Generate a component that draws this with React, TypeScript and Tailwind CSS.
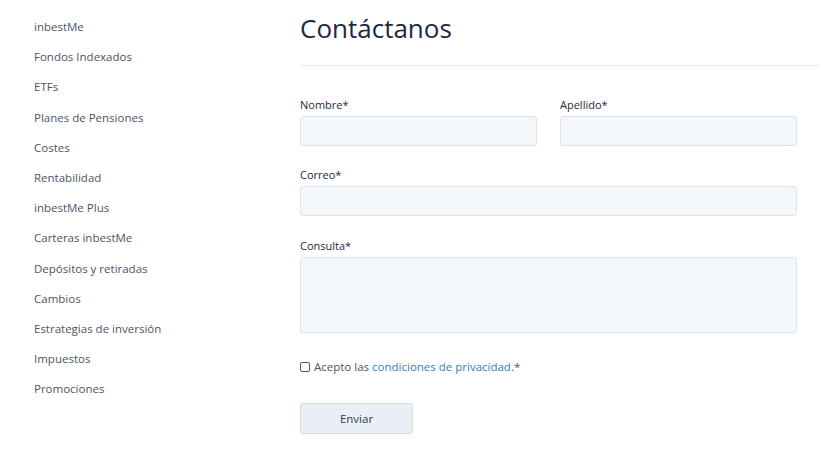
const links = [
  "inbestMe",
  "Fondos Indexados",
  "ETFs",
  "Planes de Pensiones",
  "Costes",
  "Rentabilidad",
  "inbestMe Plus",
  "Carteras inbestMe",
  "Depósitos y retiradas",
  "Cambios",
  "Estrategias de inversión",
  "Impuestos",
  "Promociones",
];

const inputCls =
  "block w-full rounded-[3px] border border-[#dde3ea] bg-[#f4f7fa] outline-none";

const App = () => {
  return (
    <div className="flex h-[460px] w-[840px] bg-white font-['Open_Sans',sans-serif] text-[#1b2a41]">
      {/* Sidebar */}
      <aside className="w-[300px] shrink-0 pl-[34px] pt-[17px]">
        <ul className="flex flex-col">
          {links.map((l) => (
            <li key={l} className="h-[30.2px] text-[11.5px] leading-[20px] text-[#4b5565]">
              {l}
            </li>
          ))}
        </ul>
      </aside>

      {/* Main */}
      <main className="w-[520px]">
        <h1 className="pt-[12px] text-[26px] leading-[32px] font-normal text-[#1b2a41]">
          Contáctanos
        </h1>
        <div className="mt-[21px] border-t border-[#e6eaef]" />

        <form className="w-[497px] pt-[31px]">
          <div className="grid grid-cols-2 gap-[23px]">
            <div>
              <label className="block text-[11px] leading-[16px] mb-[3px]">Nombre*</label>
              <input className={`${inputCls} h-[30px]`} />
            </div>
            <div>
              <label className="block text-[11px] leading-[16px] mb-[3px]">Apellido*</label>
              <input className={`${inputCls} h-[30px]`} />
            </div>
          </div>

          <div className="mt-[21px]">
            <label className="block text-[11px] leading-[16px] mb-[3px]">Correo*</label>
            <input className={`${inputCls} h-[30px]`} />
          </div>

          <div className="mt-[22px]">
            <label className="block text-[11px] leading-[16px] mb-[3px]">Consulta*</label>
            <textarea className={`${inputCls} h-[76px] resize-none`} />
          </div>

          <div className="mt-[25px] flex items-center gap-[4px] text-[11.5px] text-[#4b5565]">
            <span className="inline-block h-[10px] w-[10px] rounded-[2px] border border-[#5a5a5a] bg-white" />
            <span>
              Acepto las <a className="text-[#2f80c3]">condiciones de privacidad</a>.*
            </span>
          </div>

          <button
            type="button"
            className="mt-[28px] h-[31px] w-[113px] rounded-[3px] border border-[#d3dce6] bg-[#e9eff5] text-[11.5px] text-[#2d3b50]"
          >
            Enviar
          </button>
        </form>
      </main>
    </div>
  );
};

export default App;
